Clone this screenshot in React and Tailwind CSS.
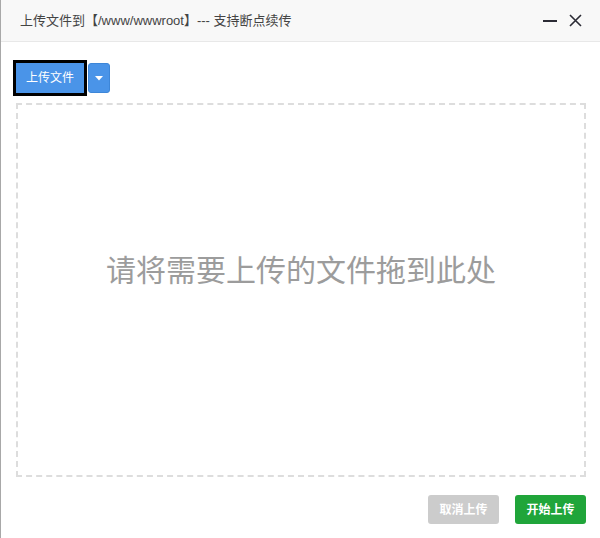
import React from 'react';

export default function App() {
    const font = { fontFamily: '"Liberation Sans", "Noto Sans CJK SC", sans-serif' };

    return (
        <div className='w-[600px] h-[538px] bg-white border-l border-[#a8a8a8] flex flex-col overflow-hidden' style={font}>
            {/* title bar */}
            <div className='h-[42px] shrink-0 bg-[#f8f8f8] border-b border-[#e8e8e8] flex items-center pl-[19px] pr-[18px]'>
                <span className='text-[13px] text-[#444] flex-1'>上传文件到【/www/wwwroot】--- 支持断点续传</span>
                <div className='flex items-center gap-[12px]'>
                    <svg width='14' height='14' viewBox='0 0 14 14'>
                        <rect x='0' y='6' width='14' height='2' fill='#2b2b35' />
                    </svg>
                    <svg width='13' height='13' viewBox='0 0 13 13'>
                        <path d='M1 1 L12 12 M12 1 L1 12' stroke='#2b2b35' strokeWidth='1.6' />
                    </svg>
                </div>
            </div>

            {/* body */}
            <div className='flex-1 flex flex-col pl-[15px] pr-[14px] pt-[21px]'>
                <div className='flex items-center gap-[4px]'>
                    <button type='button' className='h-[30px] w-[68px] bg-[#4a94e8] text-white text-[12px] rounded-none outline-[3px] outline-black outline-offset-0'>
                        上传文件
                    </button>
                    <button type='button' className='h-[30px] w-[22px] bg-[#4a94e8] border border-[#3d86d8] rounded-[3px] flex items-center justify-center'>
                        <svg width='8' height='5' viewBox='0 0 8 5'>
                            <path d='M0 0 L8 0 L4 4.5 Z' fill='#fff' />
                        </svg>
                    </button>
                </div>

                <div className='mt-[10px] h-[374px] border-2 border-dashed border-[#dddddd] flex justify-center pt-[151px]'>
                    <span className='text-[30px] leading-[30px] text-[#9c9c9c]'>请将需要上传的文件拖到此处</span>
                </div>

                <div className='flex justify-end gap-[16px] mt-[18px]'>
                    <button type='button' className='h-[29px] w-[71px] bg-[#cccccc] text-white text-[12px] font-bold rounded-[3px]'>
                        取消上传
                    </button>
                    <button type='button' className='h-[29px] w-[71px] bg-[#20a53a] text-white text-[12px] font-bold rounded-[3px]'>
                        开始上传
                    </button>
                </div>
            </div>
        </div>
    );
}
